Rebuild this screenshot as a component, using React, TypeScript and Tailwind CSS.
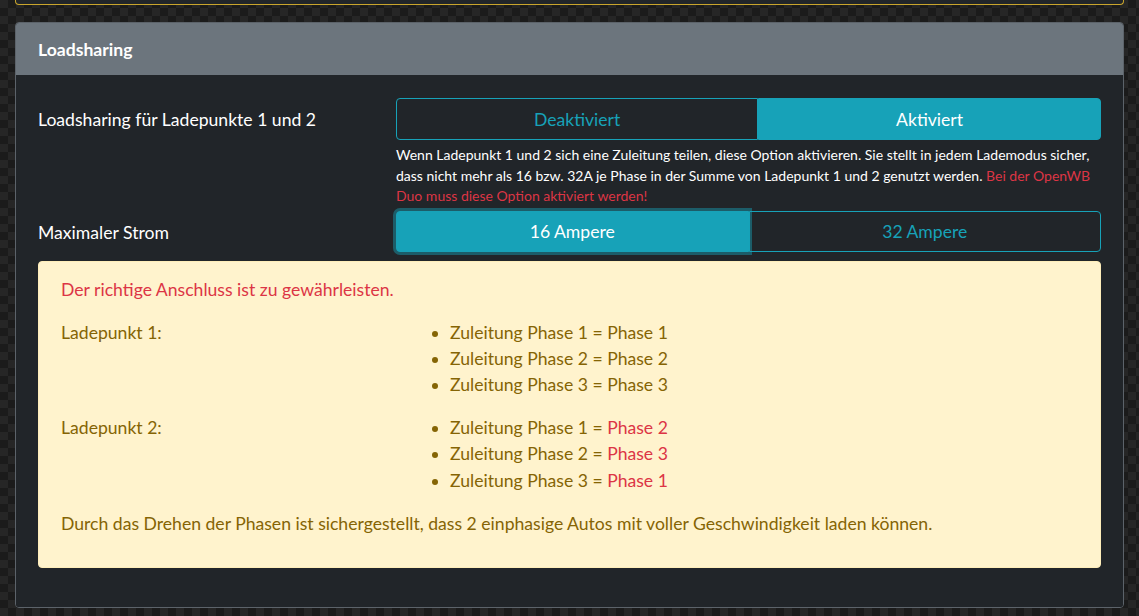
export default function App() {
  const phases1 = [
    ["Zuleitung Phase 1 = ", "Phase 1"],
    ["Zuleitung Phase 2 = ", "Phase 2"],
    ["Zuleitung Phase 3 = ", "Phase 3"],
  ] as const;
  const phases2 = [
    ["Zuleitung Phase 1 = ", "Phase 2"],
    ["Zuleitung Phase 2 = ", "Phase 3"],
    ["Zuleitung Phase 3 = ", "Phase 1"],
  ] as const;

  return (
    <div
      className="min-h-screen px-[15px] pb-[9px] bg-[#1d1d1d] bg-[image:conic-gradient(#1b1b1b_90deg,#262626_90deg_180deg,#1b1b1b_180deg_270deg,#262626_270deg)] bg-[length:16px_16px] text-[17.6px] leading-[26.4px]"
      style={{ fontFamily: "Lato, 'Noto Sans', sans-serif" }}
    >
      {/* previous card, only its bottom edge is visible */}
      <div className="h-[5px] bg-[#212529] border-x border-b border-[#c9a52c] rounded-b-[4px]" />

      {/* Loadsharing card */}
      <div className="mt-[17px] border border-[#5c636a] rounded-[4px] overflow-hidden">
        <div className="bg-[#6c757d] px-[22px] pt-[14px] pb-[12px] font-bold text-white">
          Loadsharing
        </div>

        <div className="bg-[#212529] px-[22px] pt-[23px] pb-[22px] text-white">
          {/* Loadsharing toggle */}
          <div className="flex items-start">
            <div className="w-[358px] pt-[9px] pb-[5px]">Loadsharing für Ladepunkte 1 und 2</div>
            <div className="flex-1">
              <div className="flex">
                <button className="flex-auto pt-[7.6px] pb-[5.6px] border border-[#17a2b8] rounded-l-[4px] text-[#17a2b8] bg-transparent">
                  Deaktiviert
                </button>
                <button className="flex-auto pt-[7.6px] pb-[5.6px] border border-[#17a2b8] rounded-r-[4px] text-white bg-[#17a2b8]">
                  Aktiviert
                </button>
              </div>
              <p className="mt-[5px] mb-[4px] text-[14px] leading-[20.5px]">
                Wenn Ladepunkt 1 und 2 sich eine Zuleitung teilen, diese Option aktivieren. Sie stellt in
                jedem Lademodus sicher, dass nicht mehr als 16 bzw. 32A je Phase in der Summe von Ladepunkt
                1 und 2 genutzt werden.{" "}
                <span className="text-[#dc3545]">Bei der OpenWB Duo muss diese Option aktiviert werden!</span>
              </p>
            </div>
          </div>

          {/* Maximaler Strom */}
          <div className="flex items-start">
            <div className="w-[358px] pt-[9px] pb-[5px]">Maximaler Strom</div>
            <div className="flex-1 flex">
              <button className="relative z-10 flex-1 pt-[7.6px] pb-[5.6px] border border-[#17a2b8] rounded-l-[4px] text-white bg-[#17a2b8] shadow-[0_0_0_3px_rgba(23,162,184,0.45)]">
                16 Ampere
              </button>
              <button className="flex-1 pt-[7.6px] pb-[5.6px] border border-[#17a2b8] rounded-r-[4px] text-[#17a2b8] bg-transparent">
                32 Ampere
              </button>
            </div>
          </div>

          {/* Hinweis */}
          <div className="mt-[9px] mb-[17px] bg-[#fff3cd] border border-[#ffeeba] rounded-[4px] px-[22px] pt-[15px] pb-[13px] text-[#856404]">
            <p className="text-[#dc3545] mb-[16px]">Der richtige Anschluss ist zu gewährleisten.</p>

            <div className="grid grid-cols-[345px_1fr] mb-[16px]">
              <div>Ladepunkt 1:</div>
              <ul className="list-disc pl-[44px]">
                {phases1.map(([a, b]) => (
                  <li key={a}>
                    {a}
                    {b}
                  </li>
                ))}
              </ul>
            </div>

            <div className="grid grid-cols-[345px_1fr] mb-[17px]">
              <div>Ladepunkt 2:</div>
              <ul className="list-disc pl-[44px]">
                {phases2.map(([a, b]) => (
                  <li key={a}>
                    {a}
                    <span className="text-[#dc3545]">{b}</span>
                  </li>
                ))}
              </ul>
            </div>

            <p className="mb-[17px]">
              Durch das Drehen der Phasen ist sichergestellt, dass 2 einphasige Autos mit voller
              Geschwindigkeit laden können.
            </p>
          </div>
        </div>
      </div>
    </div>
  );
}
